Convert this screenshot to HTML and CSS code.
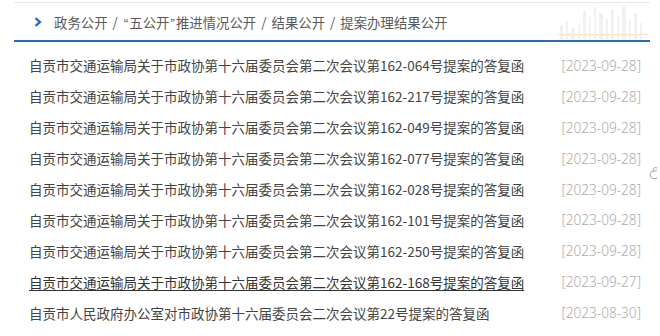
FILE: index.html
```html
<!DOCTYPE html>
<html lang="zh-CN">
<head>
<meta charset="utf-8">
<link rel="stylesheet" href="styles.css">
</head>
<body>
<div class="page">
  <div class="crumbs">
    <svg class="chev" width="8" height="10" viewBox="0 0 8 10"><path d="M1.5 1.2 L6 5 L1.5 8.8" fill="none" stroke="#2b6cb4" stroke-width="2.3"/></svg>
    <span class="path">政务公开<span class="sep">/</span><span class="q">“</span>五公开<span class="q">”</span>推进情况公开<span class="sep">/</span>结果公开<span class="sep">/</span>提案办理结果公开</span>
    <svg class="skyline" width="90" height="36" viewBox="0 0 90 36">
      <g fill="#dfe2e6" opacity="0.45">
        <rect x="2" y="22" width="3" height="14"/>
        <rect x="8" y="18" width="2" height="18"/>
        <rect x="13" y="25" width="4" height="11"/>
        <rect x="20" y="20" width="2" height="16"/>
        <rect x="25" y="8" width="3" height="28"/>
        <rect x="31" y="14" width="2" height="22"/>
        <rect x="36" y="4" width="2" height="32"/>
        <rect x="41" y="10" width="4" height="26"/>
        <rect x="48" y="16" width="2" height="20"/>
        <rect x="53" y="6" width="3" height="30"/>
        <rect x="59" y="12" width="2" height="24"/>
        <rect x="64" y="3" width="4" height="33"/>
        <rect x="71" y="18" width="2" height="18"/>
        <rect x="76" y="10" width="3" height="26"/>
        <rect x="82" y="20" width="2" height="16"/>
      </g>
      <line x1="0" y1="31.5" x2="90" y2="31.5" stroke="#f8e2d2" stroke-width="1"/>
    </svg>
  </div>
  <ul class="list">
    <li><a class="title">自贡市交通运输局关于市政协第十六届委员会第二次会议第162-064号提案的答复函</a><span class="date">[2023-09-28]</span></li>
    <li><a class="title">自贡市交通运输局关于市政协第十六届委员会第二次会议第162-217号提案的答复函</a><span class="date">[2023-09-28]</span></li>
    <li><a class="title">自贡市交通运输局关于市政协第十六届委员会第二次会议第162-049号提案的答复函</a><span class="date">[2023-09-28]</span></li>
    <li><a class="title">自贡市交通运输局关于市政协第十六届委员会第二次会议第162-077号提案的答复函</a><span class="date">[2023-09-28]</span></li>
    <li><a class="title">自贡市交通运输局关于市政协第十六届委员会第二次会议第162-028号提案的答复函</a><span class="date">[2023-09-28]</span></li>
    <li><a class="title">自贡市交通运输局关于市政协第十六届委员会第二次会议第162-101号提案的答复函</a><span class="date">[2023-09-28]</span></li>
    <li><a class="title">自贡市交通运输局关于市政协第十六届委员会第二次会议第162-250号提案的答复函</a><span class="date">[2023-09-28]</span></li>
    <li><a class="title hover">自贡市交通运输局关于市政协第十六届委员会第二次会议第162-168号提案的答复函</a><span class="date">[2023-09-27]</span></li>
    <li><a class="title">自贡市人民政府办公室对市政协第十六届委员会二次会议第22号提案的答复函</a><span class="date">[2023-08-30]</span></li>
  </ul>
  <svg class="cursor" width="12" height="18" viewBox="0 0 12 18"><path d="M9 2 C6 1 4 3 6 5 C3 5 1 8 3 11 C4 13 7 13 9 12 M6 5 C7 5 8 5 9 4" fill="none" stroke="#9a9a9a" stroke-width="1"/></svg>
</div>
</body>
</html>
```

FILE: styles.css
```css
html, body {
  margin: 0;
  padding: 0;
  background: #ffffff;
}
body {
  font-family: "Noto Sans CJK SC", "Microsoft YaHei", sans-serif;
  font-size: 13.5px;
  color: #444444;
}
.page {
  position: relative;
  width: 636px;
  margin-left: 14px;
  padding-top: 2px;
}
.crumbs {
  position: relative;
  display: flex;
  align-items: center;
  height: 37px;
  border-top: 1px solid #e8e8e8;
  border-bottom: 2px solid #2b6cb4;
  padding-left: 20px;
  gap: 12px;
}
.chev {
  display: block;
  flex: none;
}
.path {
  color: #5a5a5a;
  position: relative;
  z-index: 1;
  font-size: 13.4px;
  white-space: nowrap;
}
.sep {
  padding: 0 5px;
}
.q {
  font-family: "Liberation Sans", sans-serif;
  padding: 0 1px;
}
.skyline {
  position: absolute;
  right: 2px;
  top: 0;
}
.list {
  list-style: none;
  margin: 8px 0 0 0;
  padding: 0 9px 0 15px;
}
.list li {
  display: flex;
  justify-content: space-between;
  align-items: center;
  height: 30.9px;
}
.title {
  color: #444444;
  white-space: nowrap;
}
.title.hover {
  color: #333333;
  text-decoration: underline;
  text-underline-offset: 2px;
}
.date {
  color: #ababab;
  font-family: "Noto Sans", "Open Sans", sans-serif;
  font-weight: 300;
  font-size: 13.6px;
  white-space: nowrap;
}
.cursor {
  position: absolute;
  left: 634px;
  top: 166px;
}
```
